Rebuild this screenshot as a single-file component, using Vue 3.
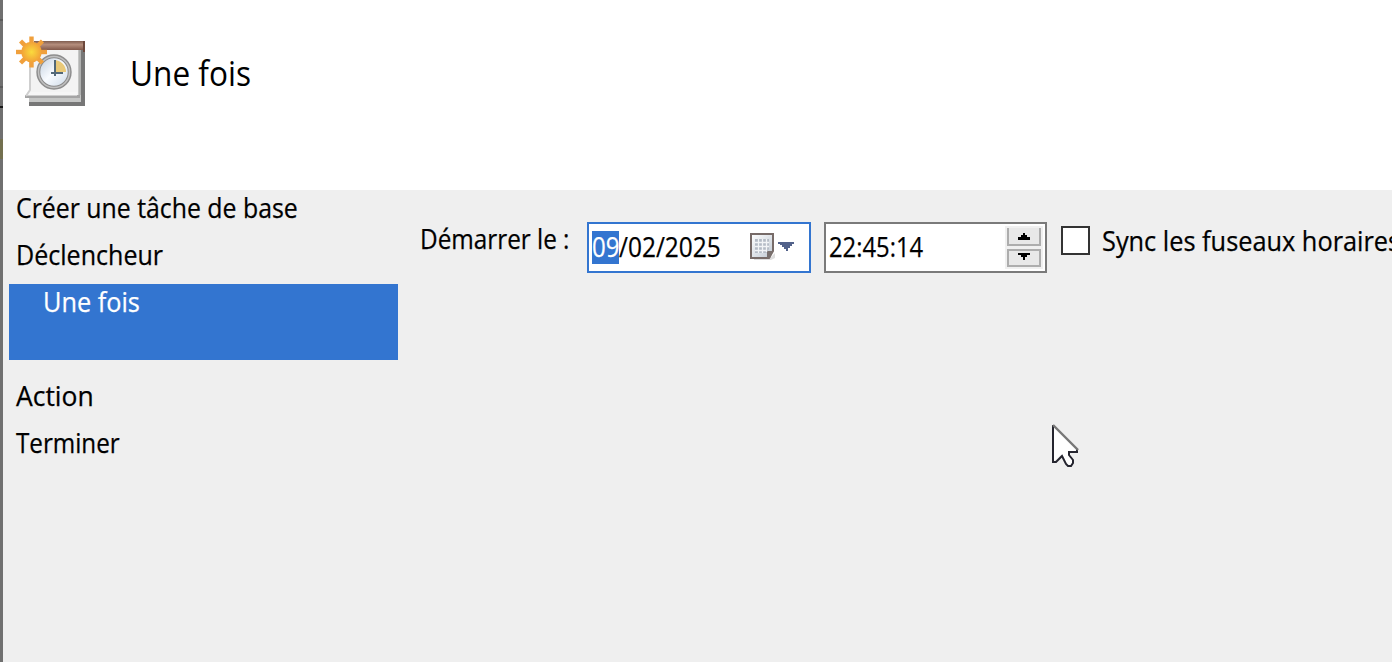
<script setup>
const before = [
  { label: 'Créer une tâche de base', cls: 'create' },
  { label: 'Déclencheur', cls: 'trigger' },
]
const after = [
  { label: 'Action', cls: 'action' },
  { label: 'Terminer', cls: 'finish' },
]
const rays = [0, 45, 90, 135, 180, 225, 270, 315]
</script>

<template>
  <div class="wizard">
    <div class="edge"></div>
    <header class="head">
      <svg class="task-icon" width="72" height="72" viewBox="0 0 72 72">
        <defs>
          <linearGradient id="bar" x1="0" y1="0" x2="0" y2="1">
            <stop offset="0" stop-color="#805e50" />
            <stop offset=".4" stop-color="#b58e7c" />
            <stop offset="1" stop-color="#82594a" />
          </linearGradient>
          <radialGradient id="sun">
            <stop offset="0" stop-color="#fadb3d" />
            <stop offset="1" stop-color="#f2a037" />
          </radialGradient>
          <linearGradient id="face" x1="0" y1="0" x2="1" y2="1">
            <stop offset="0" stop-color="#bdcbdc" />
            <stop offset=".5" stop-color="#f8fbff" />
            <stop offset="1" stop-color="#c8d6e4" />
          </linearGradient>
        </defs>
        <path d="M16 12H72V70H16z" fill="#777" />
        <path d="M16 12H68V66H16z" fill="#c5c6c5" />
        <path d="M16 12H65V61H16z" fill="#f3f3f3" />
        <path d="M12 59H67V62H12z" fill="#a4a4a4" />
        <path d="M14 56H64V59.5H14z" fill="#f6f6f6" />
        <path d="M17 16V54L13 60" fill="none" stroke="#cfcfcf" stroke-width="2" />
        <path d="M67 14V59" stroke="#b0b1b0" stroke-width="2" />
        <rect x="21" y="5" width="51" height="9" fill="url(#bar)" />
        <path d="M70 5H72V16H70z" fill="#6d483c" />
        <circle cx="41" cy="36" r="15.7" fill="url(#face)" stroke="#8d8d8d" stroke-width="4" />
        <circle cx="41" cy="36" r="15.5" fill="none" stroke="#c0c0c0" stroke-width="1.5" />
        <path d="M41 36V24A12 12 0 0 1 53 36z" fill="#e9c979" />
        <path d="M42 24V40M38 37H50" fill="none" stroke="#526878" stroke-width="2" />
        <g stroke="#f0a03c" stroke-width="4.4">
          <path v-for="r in rays" :key="r" d="M18.5 8V.5" :transform="`rotate(${r} 18.5 16)`" />
        </g>
        <circle cx="18.5" cy="16" r="10.3" fill="url(#sun)" />
      </svg>
      <h1 class="title"><span class="t heading">Une fois</span></h1>
    </header>
    <main class="body">
      <nav class="steps">
        <div v-for="s in before" :key="s.cls" class="step"><span class="t" :class="s.cls">{{ s.label }}</span></div>
        <div class="step current"><span class="t once">Une fois</span></div>
        <div v-for="s in after" :key="s.cls" class="step"><span class="t" :class="s.cls">{{ s.label }}</span></div>
      </nav>
      <section class="form">
        <label class="start"><span class="t startlabel">Démarrer le :</span></label>
        <div class="field date">
          <span class="day"><span class="t">09</span></span><span class="t rest">/02/2025</span>
          <svg class="cal" width="48" height="34" viewBox="0 0 48 34">
            <defs>
              <linearGradient id="page" x1="0" y1="0" x2="1" y2="1">
                <stop offset="0" stop-color="#fff" />
                <stop offset="1" stop-color="#bfc8d2" />
              </linearGradient>
            </defs>
            <path d="M5 27H22L26 23V28L22 30H5z" fill="#dedede" />
            <path d="M2 4H24V21L20 28H2z" fill="url(#page)" stroke="#776b68" stroke-width="2" />
            <path d="M24 21H18V28H21z" fill="#79706e" />
            <path d="M6 9H20V19L17 23H6z" fill="#b4bbc5" />
            <path d="M9.5 9V23M13.5 9V23M17.5 9V22M6 12.5H20M6 16.5H20M6 20.5H18" stroke="#f2f4f6" stroke-width="1.3" />
            <path d="M29 12H45V14H43V16H41V18H39V21H37V19H35V17H33V15H31V14H29z" fill="#52628a" />
          </svg>
        </div>
        <div class="field time">
          <span class="t clock">22:45:14</span>
          <div class="spin">
            <div class="btn up"><svg width="12" height="8" viewBox="0 0 12 8"><path d="M5 0H7V2H9V4H12V7H0V4H3V2H5z" /></svg></div>
            <div class="btn down"><svg width="12" height="8" viewBox="0 0 12 8"><path d="M0 0H12V2H9V4H7V7H5V4H3V2H0z" /></svg></div>
          </div>
        </div>
        <div class="box"></div>
        <label class="sync"><span class="t synclabel">Sync les fuseaux horaires</span></label>
      </section>
    </main>
    <svg class="pointer" width="30" height="46" viewBox="0 0 30 46">
      <path d="M2 2V38L10 31L15 41L20 41L22 38L18 29H26V26z" fill="#fff" />
      <path d="M2 1V38H5L11 32L15 40L17 42H20L22 39V36L18 31V28H26V25" fill="none" stroke="#25252f" stroke-width="2" />
      <path d="M2 1L27 26" fill="none" stroke="#777" stroke-width="2.4" />
    </svg>
  </div>
</template>

<style>
body { margin: 0; overflow: hidden; }
</style>

<style scoped>
.wizard {
  width: 1392px; height: 662px; overflow: hidden; position: relative;
  display: grid; grid-template: 190px 472px / 3px 1389px;
  background: #efefef; color: #000;
  font: 27px/36px "Open Sans", "Noto Sans", sans-serif;
  -webkit-text-stroke: .25px currentColor;
}
.edge {
  grid-row: 1 / 3;
  background: linear-gradient(#5b5b5b, #5b5b5b) 0 19px / 3px 2px no-repeat,
    linear-gradient(#5b5b5b, #5b5b5b) 0 86px / 3px 2px no-repeat,
    linear-gradient(#181818, #181818) 0 106px / 3px 2px no-repeat,
    linear-gradient(#73704f, #73704f) 0 139px / 3px 20px no-repeat, #707070;
}
.head { background: #fff; display: flex; }
.task-icon { margin: 36px 0 0 10px; flex: none; }
.title { margin: 48px 0 0 45px; font-size: 34px; line-height: 50px; font-weight: 400; -webkit-text-stroke-width: 0; }
.t { display: inline-block; white-space: pre; transform-origin: 0 50%; transform: scaleX(.89); }
.heading { transform: scaleX(.929); }
.create { transform: scaleX(.92); }
.trigger { transform: scaleX(.928); }
.once { transform: scaleX(.937); }
.action { transform: scaleX(.98); }
.finish { transform: scaleX(.897); }
.startlabel { transform: scaleX(.9); }
.rest { transform: scaleX(.905); }
.clock { transform: scaleX(.882); }
.synclabel { transform: scaleX(.938); }
.body { display: flex; min-width: 0; }
.steps { width: 389px; margin-left: 6px; flex: none; }
.step { height: 47px; padding-left: 7px; box-sizing: border-box; }
.current { height: 76px; padding-left: 34px; margin-bottom: 18px; background: #3375d0; color: #fff; }
.form { display: flex; align-items: flex-start; margin-left: 22px; flex: 1; min-width: 0; overflow: hidden; }
.start { width: 167px; margin-top: 31px; flex: none; }
.field { box-sizing: border-box; height: 51px; margin-top: 32px; border: 2px solid #3375d0; background: #fff; flex: none; display: flex; }
.date { width: 224px; padding: 5px 0 0 3px; }
.day { width: 27px; height: 33px; margin-top: 2px; background: #3375d0; color: #fff; flex: none; line-height: 32px; }
.rest { width: 130px; flex: none; }
.cal { flex: none; margin-top: 1px; }
.time { width: 223px; margin-left: 13px; border-color: #7a7a7a; padding: 2px 2px 0 3px; justify-content: space-between; }
.clock { margin-top: 3px; }
.spin { width: 38px; height: 43px; background: #f0f0f0; padding: 2px; box-sizing: border-box; flex: none; }
.btn { width: 34px; box-sizing: border-box; border: 2px solid #adadad; background: #e8e8e8; display: flex; justify-content: center; }
.up { height: 18px; border-top: 0; padding-top: 5px; }
.down { height: 18px; margin-top: 3px; padding-top: 2px; }
.box { width: 29px; height: 29px; box-sizing: border-box; border: 2px solid #333; background: #fff; margin: 36px 0 0 14px; flex: none; }
.sync { margin: 33px 0 0 12px; flex: none; }
.pointer { position: absolute; left: 1051px; top: 424px; }
</style>
